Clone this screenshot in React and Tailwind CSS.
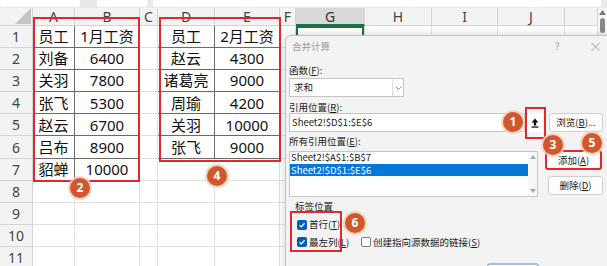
const COLS = ['', 'A', 'B', 'C', 'D', 'E', 'F', 'G', 'H', 'I', 'J', ''];

// sheet contents, keyed by column index
const DATA = {
  1: ['员工', '刘备', '关羽', '张飞', '赵云', '吕布', '貂蝉'],
  2: ['1月工资', '6400', '7800', '5300', '6700', '8900', '10000'],
  4: ['员工', '赵云', '诸葛亮', '周瑜', '关羽', '张飞'],
  5: ['2月工资', '4300', '9000', '4200', '10000', '9000'],
};

const ROWS = Array.from({ length: 11 }, (_, i) => i + 1);

function Badge({ n, className }) {
  return (
    <div
      className={`absolute flex h-[20px] w-[20px] items-center justify-center rounded-full bg-[#d0582c] text-[12px] font-bold leading-none text-white shadow-[0_0_0_2px_rgba(244,205,188,0.85)] ${className}`}
    >
      {n}
    </div>
  );
}

function Check({ checked }) {
  if (!checked) {
    return <span className="h-[10px] w-[10px] shrink-0 rounded-[2px] border border-[#7a7a7a] bg-white" />;
  }
  return (
    <span className="flex h-[10px] w-[10px] shrink-0 items-center justify-center rounded-[2px] bg-[#005fb8]">
      <svg width="8" height="8" viewBox="0 0 10 10">
        <polyline points="2,5.2 4.2,7.4 8.2,2.8" fill="none" stroke="white" strokeWidth="1.6" />
      </svg>
    </span>
  );
}

function Sheet() {
  return (
    <div className="flex">
      <div className="grid w-[598px] grid-cols-[33px_42px_65px_18px_57px_65px_16px_69px_67px_66px_67px_33px] grid-rows-[18px_repeat(11,22.1px)]">
        {COLS.map((c, i) =>
          i === 0 ? (
            <div key="corner" className="relative border-b border-r border-[#d4d4d4] bg-[#f3f3f3]">
              <svg className="absolute bottom-[1px] right-[1px]" width="16" height="16" viewBox="0 0 16 16">
                <polygon points="16,0 16,16 0,16" fill="#c4c4c4" />
              </svg>
            </div>
          ) : (
            <div
              key={'h' + i}
              className={`flex items-center justify-center border-r text-[14px] ${
                c === 'G'
                  ? 'border-b-2 border-[#d4d4d4] border-b-[#1e7145] bg-[#d9d9d9] text-[#333]'
                  : 'border-b border-[#d4d4d4] bg-[#f3f3f3] text-[#444]'
              }`}
            >
              {c}
            </div>
          )
        )}
        {ROWS.map((r) =>
          COLS.map((_, c) => {
            if (c === 0) {
              return (
                <div
                  key={r + '-0'}
                  className="flex items-center justify-center border-b border-r border-[#d4d4d4] bg-[#f3f3f3] text-[14px] text-[#444]"
                >
                  {r}
                </div>
              );
            }
            const v = DATA[c]?.[r - 1];
            const active = r === 1 && c === 7;
            return (
              <div
                key={r + '-' + c}
                className={`flex items-center justify-center border-b border-r text-[15px] text-[#111] ${
                  v !== undefined ? 'border-[#6b6b6b]' : 'border-[#e1e1e1]'
                } ${active ? 'shadow-[inset_0_0_0_2px_#1e7145]' : ''}`}
              >
                {v}
              </div>
            );
          })
        )}
      </div>
      <div className="flex w-[9px] flex-col items-center bg-[#f7f7f7] pt-[2px]">
        <svg width="7" height="5" viewBox="0 0 7 5">
          <polygon points="3.5,0 7,5 0,5" fill="#777" />
        </svg>
        <div className="mt-[3px] h-[15px] w-[5px] rounded-[3px] bg-[#8a8a8a]" />
      </div>
    </div>
  );
}

function Btn({ children, className }) {
  return (
    <div
      className={`flex items-center justify-center rounded-[3px] bg-[#fdfdfd] text-[#1a1a1a] ${className}`}
    >
      {children}
    </div>
  );
}

function Dialog() {
  return (
    <div className="absolute left-[285px] top-[35px] h-[240px] w-[330px] rounded-tl-[6px] border border-[#c4c4c4] bg-[#f3f3f3] font-['Noto_Sans_CJK_SC',sans-serif] text-[9.5px] text-[#1a1a1a] shadow-[0_0_8px_rgba(0,0,0,0.18)]">
      <div className="flex h-[20px] items-center pl-[6px] text-[#9b9b9b]">
        <span className="w-[263px]">合并计算</span>
        <span className="w-[34px]">?</span>
        <span className="text-[13px] font-light">×</span>
      </div>

      <div className="pl-[3px]">
        <div className="mt-[8px] h-[12px] leading-[12px]">
          函数(<span className="underline">F</span>):
        </div>
        <div className="mt-[2px] flex h-[19px] w-[115px] items-center border border-[#c6c6c6] bg-white">
          <span className="flex-1 pl-[4px]">求和</span>
          <span className="flex h-full w-[11px] items-center justify-center border-l border-[#dedede]">
            <svg width="7" height="4" viewBox="0 0 7 4">
              <polyline points="0.5,0.5 3.5,3.5 6.5,0.5" fill="none" stroke="#8a8a8a" strokeWidth="0.9" />
            </svg>
          </span>
        </div>

        <div className="mt-[4px] h-[12px] leading-[12px]">
          引用位置(<span className="underline">R</span>):
        </div>
        <div className="flex h-[19px] items-stretch">
          <div className="flex w-[236px] items-center border border-[#c6c6c6] bg-white pl-[2px]">
            Sheet2!$D$1:$E$6
          </div>
          <div className="ml-[2px] flex w-[16px] items-center justify-center bg-white">
            <svg width="8" height="10" viewBox="0 0 8 10">
              <path d="M4 0.5 L0.6 4.4 H2.8 V7.4 H5.2 V4.4 H7.4 Z" fill="#111" />
              <rect x="0.6" y="8.4" width="6.8" height="1.3" fill="#111" />
            </svg>
          </div>
          <Btn className="ml-[6px] w-[54px] border border-[#d0d0d0]">
            浏览(<span className="underline">B</span>)...
          </Btn>
        </div>

        <div className="mt-[3px] h-[12px] leading-[12px]">
          所有引用位置(<span className="underline">E</span>):
        </div>
        <div className="mt-[3px] flex">
          <div className="mt-[1px] flex h-[46px] w-[249px] border border-[#c6c6c6] bg-white">
            <div className="flex-1">
              <div className="h-[11.5px] pl-[1px] leading-[11.5px]">Sheet2!$A$1:$B$7</div>
              <div className="h-[12px] bg-[#0078d7] pl-[1px] leading-[12px] text-white">Sheet2!$D$1:$E$6</div>
            </div>
            <div className="flex w-[9px] flex-col items-center justify-between bg-[#f7f7f7] py-[3px]">
              <svg width="6" height="4" viewBox="0 0 6 4">
                <polygon points="3,0 6,4 0,4" fill="#a8a8a8" />
              </svg>
              <svg width="6" height="4" viewBox="0 0 6 4">
                <polygon points="0,0 6,0 3,4" fill="#a8a8a8" />
              </svg>
            </div>
          </div>
          <div className="ml-[7px] flex flex-col">
            <Btn className="h-[20px] w-[57px] border-2 border-[#e0282e]">
              添加(<span className="underline">A</span>)
            </Btn>
            <Btn className="ml-[3px] mt-[6px] h-[19px] w-[55px] border border-[#d0d0d0]">
              删除(<span className="underline">D</span>)
            </Btn>
          </div>
        </div>

        <div className="mt-[3px] h-[12px] pl-[6px] leading-[12px]">标签位置</div>
        <div className="mt-[4px] flex h-[17px] items-center pl-[8px]">
          <Check checked />
          <span className="ml-[2px]">
            首行(<span className="underline">T</span>)
          </span>
        </div>
        <div className="flex h-[18px] items-center pl-[8px]">
          <div className="flex w-[64px] items-center">
            <Check checked />
            <span className="ml-[2px]">
              最左列(<span className="underline">L</span>)
            </span>
          </div>
          <Check />
          <span className="ml-[2px]">
            创建指向源数据的链接(<span className="underline">S</span>)
          </span>
        </div>

        <div className="ml-[198px] mt-[12px] h-[20px] w-[52px] rounded-[3px] border-2 border-[#9fc3e8] bg-[#fdfdfd]" />
      </div>
    </div>
  );
}

export default function App() {
  return (
    <div className="relative h-[266px] w-[607px] overflow-hidden bg-white font-['Noto_Sans','Noto_Sans_CJK_SC',sans-serif]">
      <div className="flex h-[8px] bg-[#e9e9e9]">
        <div className="h-[7px] w-[80px] rounded-b-[3px] bg-white" />
        <div className="ml-[17px] h-[7px] w-[50px] rounded-b-[3px] bg-white" />
        <div className="ml-[6px] mr-[6px] h-[7px] flex-1 rounded-b-[3px] bg-white" />
      </div>
      <Sheet />

      <div className="absolute left-[33px] top-[17px] h-[165px] w-[107px] border-2 border-[#e0282e]" />
      <div className="absolute left-[159px] top-[17px] h-[145px] w-[122px] border-2 border-[#e0282e]" />

      <Dialog />

      <div className="absolute left-[525px] top-[107px] h-[32px] w-[21px] border-2 border-[#e0282e]" />
      <div className="absolute left-[290px] top-[211px] h-[41px] w-[52px] border-2 border-[#e0282e]" />

      <Badge n="1" className="left-[503px] top-[112px]" />
      <Badge n="2" className="left-[70px] top-[178px]" />
      <Badge n="3" className="left-[543px] top-[135px]" />
      <Badge n="4" className="left-[207px] top-[166px]" />
      <Badge n="5" className="left-[582px] top-[133px]" />
      <Badge n="6" className="left-[345px] top-[213px]" />
    </div>
  );
}
